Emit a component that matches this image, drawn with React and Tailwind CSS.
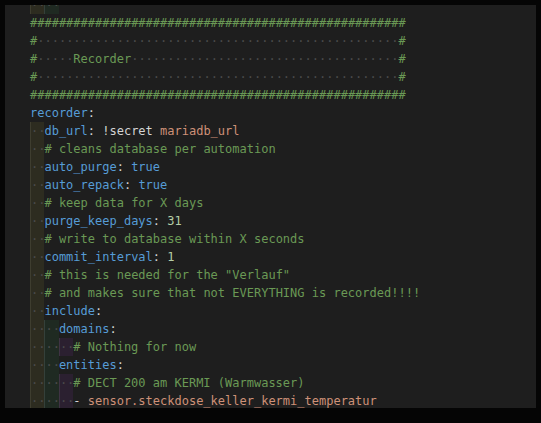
import React from 'react';

const KEY = 'text-[#569cd6]';
const COM = 'text-[#6a9955]';
const STR = 'text-[#ce9178]';
const NUM = 'text-[#b5cea8]';
const PUN = 'text-[#d4d4d4]';
const WS = 'text-[#4a4a4a]';

const INDENT = [
  'bg-[#2d2c20] border-l border-[#3e3d2f]',
  'bg-[#1f2a22] border-l border-[#34403a]',
  'bg-[#2b2030] border-l border-[#3f3344]',
];

const dots = (n) => '·'.repeat(n);
const hashes = '#'.repeat(52);

const lines = [
  { indent: 2, tokens: [] },
  { indent: 0, tokens: [[hashes, COM]] },
  { indent: 0, tokens: [['#', COM], [dots(50), WS], ['#', COM]] },
  { indent: 0, tokens: [['#', COM], [dots(5), WS], ['Recorder', COM], [dots(37), WS], ['#', COM]] },
  { indent: 0, tokens: [['#', COM], [dots(50), WS], ['#', COM]] },
  { indent: 0, tokens: [[hashes, COM]] },
  { indent: 0, tokens: [['recorder', KEY], [':', PUN]] },
  { indent: 1, tokens: [['db_url', KEY], [': !secret ', PUN], ['mariadb_url', STR]] },
  { indent: 1, tokens: [['# cleans database per automation', COM]] },
  { indent: 1, tokens: [['auto_purge', KEY], [': ', PUN], ['true', KEY]] },
  { indent: 1, tokens: [['auto_repack', KEY], [': ', PUN], ['true', KEY]] },
  { indent: 1, tokens: [['# keep data for X days', COM]] },
  { indent: 1, tokens: [['purge_keep_days', KEY], [': ', PUN], ['31', NUM]] },
  { indent: 1, tokens: [['# write to database within X seconds', COM]] },
  { indent: 1, tokens: [['commit_interval', KEY], [': ', PUN], ['1', NUM]] },
  { indent: 1, tokens: [['# this is needed for the "Verlauf"', COM]] },
  { indent: 1, tokens: [['# and makes sure that not EVERYTHING is recorded!!!!', COM]] },
  { indent: 1, tokens: [['include', KEY], [':', PUN]] },
  { indent: 2, tokens: [['domains', KEY], [':', PUN]] },
  { indent: 3, tokens: [['# Nothing for now', COM]] },
  { indent: 2, tokens: [['entities', KEY], [':', PUN]] },
  { indent: 3, tokens: [['# DECT 200 am KERMI (Warmwasser)', COM]] },
  { indent: 3, tokens: [['- ', PUN], ['sensor.steckdose_keller_kermi_temperatur', STR]] },
  { indent: 3, tokens: [['- ', PUN], ['sensor.steckdose_keller_kermi_energie', STR]] },
];

function Line({ indent, tokens }) {
  return (
    <div className="flex h-[18px] items-center whitespace-pre">
      {INDENT.slice(0, indent).map((cls, i) => (
        <span key={i} className={`inline-block w-[2ch] h-[18px] leading-[18px] ${WS} ${cls}`}>··</span>
      ))}
      {tokens.map(([text, cls], i) => (
        <span key={i} className={cls}>{text}</span>
      ))}
    </div>
  );
}

export default function App() {
  return (
    <div className="w-[541px] h-[423px] bg-[#050505] pt-[5px] pl-[5px]">
      <div className="w-[531px] h-[403px] bg-[#1e1e1e] overflow-hidden pl-[25px]">
        <div className="mt-[-9px] font-['DejaVu_Sans_Mono','Liberation_Mono',monospace] text-[12px] leading-[18px]">
          {lines.map((l, i) => (
            <Line key={i} {...l} />
          ))}
        </div>
      </div>
    </div>
  );
}
